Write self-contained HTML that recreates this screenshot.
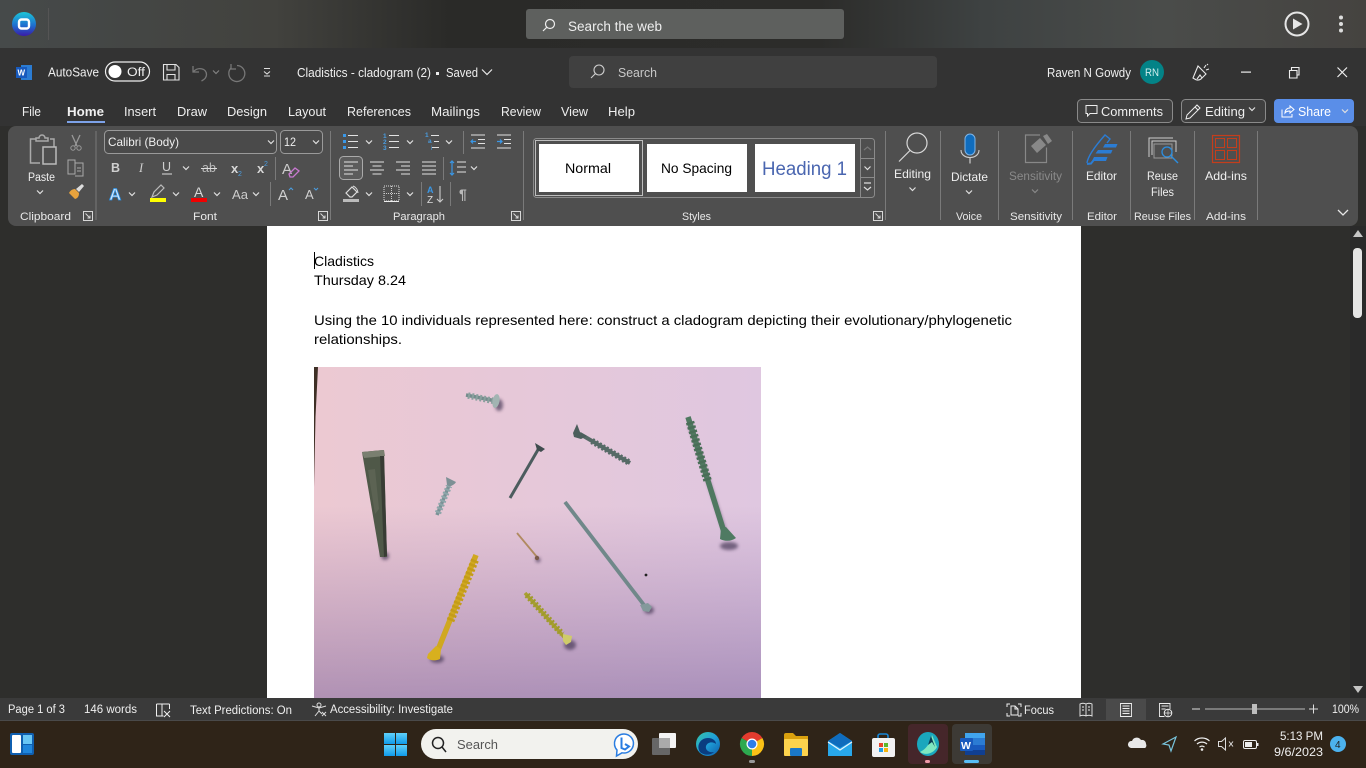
<!DOCTYPE html>
<html lang="en"><head><meta charset="utf-8"><title>Cladistics - cladogram (2)</title>
<style>
html,body{margin:0;padding:0;background:#2e2e2c;width:1366px;height:768px;overflow:hidden}
svg{display:block}
text{font-family:"Liberation Sans",sans-serif;fill:#efefef;font-size:12.5px}
.rl{font-size:11px;fill:#e8e8e8}
.d{fill:#000;font-size:14px}
.ln{fill:none;stroke:#e2e2e2;stroke-width:1.1}
</style></head><body>
<svg width="1366" height="768" viewBox="0 0 1366 768" xmlns="http://www.w3.org/2000/svg">
<defs>
<linearGradient id="top" x1="0" x2="1" y1="0" y2="0"><stop offset="0" stop-color="#464a4a"/><stop offset=".2" stop-color="#42423e"/><stop offset=".33" stop-color="#2a2a28"/><stop offset=".6" stop-color="#2c2c2a"/><stop offset=".72" stop-color="#3e4242"/><stop offset=".85" stop-color="#4a4c4a"/><stop offset="1" stop-color="#454340"/></linearGradient>
<linearGradient id="logo" x1="0" x2="0" y1="0" y2="1"><stop offset="0" stop-color="#1cc6d8"/><stop offset=".55" stop-color="#1e70d0"/><stop offset="1" stop-color="#3a1aa8"/></linearGradient>
<linearGradient id="ph" x1="0" x2="1" y1="0" y2="0"><stop offset="0" stop-color="#ecc9d2"/><stop offset="1" stop-color="#dfc7e0"/></linearGradient>
<linearGradient id="pv" x1="0" x2="0" y1="0" y2="1"><stop offset=".42" stop-color="#7a5a96" stop-opacity="0"/><stop offset="1" stop-color="#6a5090" stop-opacity=".46"/></linearGradient>
<linearGradient id="st" x1="0" x2="0" y1="0" y2="1"><stop offset="0" stop-color="#5fd0fa"/><stop offset="1" stop-color="#0f9bea"/></linearGradient>
<linearGradient id="ed" x1="0" x2="1" y1="0" y2="1"><stop offset="0" stop-color="#36c6a8"/><stop offset=".5" stop-color="#1f9fd8"/><stop offset="1" stop-color="#0c5cab"/></linearGradient>
<filter id="b"><feGaussianBlur stdDeviation="1.6"/></filter>
<path id="c" d="M-3 -1.5L0 1.5L3 -1.5" fill="none" stroke="#e0e0e0" stroke-width="1.2"/>
<path id="launch" d="M-4.5 -4.5H4.5V4.5H-4.5ZM-2.5 -2.5L2 2M2 -.5V2H-.5" fill="none" stroke="#d8d8d8" stroke-width="1"/>
</defs>

<!-- backgrounds -->
<rect width="1366" height="48" fill="url(#top)"/>
<rect y="48" width="1366" height="78" fill="#333333"/>
<rect y="126" width="1366" height="572" fill="#2e2e2c"/>
<rect x="267" y="226" width="814" height="472" fill="#fff"/>
<rect x="1350" y="226" width="16" height="472" fill="#2a2a2a"/>
<path d="M1358 230l5 7h-10z" fill="#c4c4c4"/>
<rect x="1353" y="248" width="9" height="70" rx="4" fill="#e4e4e4"/>
<path d="M1353 686h10l-5 7z" fill="#c4c4c4"/>

<!-- top browser bar -->
<circle cx="24" cy="24" r="12" fill="url(#logo)"/>
<rect x="19" y="19.500" width="10" height="9" rx="2.500" fill="none" stroke="#fff" stroke-width="2.400"/>
<rect x="48" y="8" width="1" height="32" fill="#555"/>
<rect x="526" y="9" width="318" height="30" rx="3" fill="#5e605e"/>
<circle cx="550" cy="24" r="4.500" fill="none" stroke="#eee" stroke-width="1.200"/><path d="M546.600 27.400L543 31" stroke="#eee" stroke-width="1.200"/>
<text x="568" y="31" textLength="94" lengthAdjust="spacingAndGlyphs" style="font-size:13.500px">Search the web</text>
<circle cx="1297" cy="24" r="11.500" fill="none" stroke="#e6e6e6" stroke-width="2"/><path d="M1293 18.500v11l9.500-5.500z" fill="#e6e6e6"/>
<circle cx="1341" cy="17.500" r="2" fill="#ddd"/><circle cx="1341" cy="24" r="2" fill="#ddd"/><circle cx="1341" cy="30.500" r="2" fill="#ddd"/>

<!-- title bar -->
<rect x="21" y="65" width="11" height="15" fill="#2b7cd3"/><rect x="16" y="67" width="11" height="11" fill="#185abd"/>
<text x="17.500" y="75.500" style="font-size:8px;font-weight:bold;fill:#fff">W</text>
<text x="48" y="76.500" textLength="51" lengthAdjust="spacingAndGlyphs">AutoSave</text>
<rect x="105.500" y="62" width="44" height="19" rx="9.500" fill="#333" stroke="#eee" stroke-width="1.200"/>
<circle cx="115" cy="71.500" r="6.500" fill="#fff"/>
<text x="127" y="76" textLength="18" lengthAdjust="spacingAndGlyphs" style="font-size:11.500px">Off</text>
<path d="M163.500 64.500H176l3 3V80H163.500ZM167 64.500V70H175V64.500M167 80V74.500H175V80" class="ln"/>
<path d="M193 66v6h6M193.500 71.500c5-5 13-3 13 3 0 3-2 5-5 6.500" fill="none" stroke="#777" stroke-width="1.300"/>
<use href="#c" x="216" y="72" style="opacity:.45"/>
<path d="M237 65.500a8 8 0 1 1-6 2.500M231 64v5h5" fill="none" stroke="#777" stroke-width="1.300"/>
<path d="M264 68.500h6M264 71.500l3 2.500 3-2.500M264 76h6" fill="none" stroke="#ddd" stroke-width="1.100"/>
<text x="297" y="77" textLength="134" lengthAdjust="spacingAndGlyphs">Cladistics - cladogram (2)</text>
<rect x="436" y="72" width="3" height="3" fill="#eee"/>
<text x="446" y="77" textLength="32" lengthAdjust="spacingAndGlyphs">Saved</text>
<path d="M482 69.500l5 5 5-5" fill="none" stroke="#e8e8e8" stroke-width="1.200"/>
<rect x="569" y="56" width="368" height="32" rx="4" fill="#404040"/>
<circle cx="599" cy="70" r="5" fill="none" stroke="#cfcfcf" stroke-width="1.100"/><path d="M595.500 73.500L591 78" stroke="#cfcfcf" stroke-width="1.100"/>
<text x="618" y="77" textLength="39" lengthAdjust="spacingAndGlyphs" style="fill:#c8c8c8">Search</text>
<text x="1047" y="77" textLength="84" lengthAdjust="spacingAndGlyphs">Raven N Gowdy</text>
<circle cx="1152" cy="72" r="12" fill="#038387"/><text x="1145" y="76" textLength="14" lengthAdjust="spacingAndGlyphs" style="font-size:11px;fill:#cfeeee">RN</text>
<path d="M1193 78l5-12 8 8-5 5c-3 2-5 1-8-1zM1197 79l3-4 2 3M1204 68l2-3M1206 70l3-1M1207 65l1-1" fill="none" stroke="#e8e8e8" stroke-width="1.100"/>
<rect x="1241" y="71.500" width="10" height="1.200" fill="#eee"/>
<path d="M1289.500 70.500h7.500v7.500h-7.500zM1291.500 70v-2.500h7.500v7.500h-2" fill="none" stroke="#eee" stroke-width="1.100"/>
<path d="M1337.500 67.500l9.500 9.500M1347 67.500l-9.500 9.500" stroke="#eee" stroke-width="1.200"/>

<!-- tabs -->
<text x="22" y="116" textLength="19" lengthAdjust="spacingAndGlyphs">File</text>
<text x="67" y="116" textLength="37" lengthAdjust="spacingAndGlyphs" style="font-weight:bold">Home</text>
<rect x="67" y="121" width="38" height="2" fill="#7da2e8"/>
<text x="124" y="116" textLength="32" lengthAdjust="spacingAndGlyphs">Insert</text>
<text x="177" y="116" textLength="30" lengthAdjust="spacingAndGlyphs">Draw</text>
<text x="227" y="116" textLength="40" lengthAdjust="spacingAndGlyphs">Design</text>
<text x="288" y="116" textLength="38" lengthAdjust="spacingAndGlyphs">Layout</text>
<text x="347" y="116" textLength="64" lengthAdjust="spacingAndGlyphs">References</text>
<text x="431" y="116" textLength="49" lengthAdjust="spacingAndGlyphs">Mailings</text>
<text x="501" y="116" textLength="40" lengthAdjust="spacingAndGlyphs">Review</text>
<text x="561" y="116" textLength="27" lengthAdjust="spacingAndGlyphs">View</text>
<text x="608" y="116" textLength="27" lengthAdjust="spacingAndGlyphs">Help</text>
<rect x="1077.500" y="99.500" width="95" height="23" rx="4" fill="#3f3f3f" stroke="#8a8a8a"/>
<path d="M1086 105.500h11v8h-7l-2.500 2.500v-2.500h-1.500z" fill="none" stroke="#eee"/>
<text x="1101" y="116" textLength="62" lengthAdjust="spacingAndGlyphs">Comments</text>
<rect x="1181.500" y="99.500" width="84" height="23" rx="4" fill="#3f3f3f" stroke="#8a8a8a"/>
<path d="M1186 119l1-4 10-10 3 3-10 10zM1195 107l3 3" fill="none" stroke="#eee"/>
<text x="1205" y="116" textLength="40" lengthAdjust="spacingAndGlyphs">Editing</text>
<use href="#c" x="1252" y="109" />
<rect x="1274" y="99" width="80" height="24" rx="4" fill="#5a8ee8"/>
<path d="M1282 109.500v7.500h10v-3M1285 113c0-3 2-5 5-5v-2l4 3.500-4 3.500v-2c-2 0-4 .5-5 2z" fill="none" stroke="#fff"/>
<text x="1298" y="116" textLength="33" lengthAdjust="spacingAndGlyphs" style="fill:#fff">Share</text>
<use href="#c" x="1345" y="111"/>

<!-- ribbon -->
<rect x="8" y="126" width="1350" height="100" rx="8" fill="#4f4f4f"/>
<g fill="#7a7a7a">
<rect x="95.500" y="131" width="1" height="89"/><rect x="330" y="131" width="1" height="89"/><rect x="523" y="131" width="1" height="89"/><rect x="885" y="131" width="1" height="89"/><rect x="940" y="131" width="1" height="89"/><rect x="998" y="131" width="1" height="89"/><rect x="1072" y="131" width="1" height="89"/><rect x="1130" y="131" width="1" height="89"/><rect x="1194" y="131" width="1" height="89"/><rect x="1257" y="131" width="1" height="89"/>
<rect x="275" y="157" width="1" height="23"/><rect x="270" y="182" width="1" height="24"/><rect x="463" y="131" width="1" height="23"/><rect x="443" y="157" width="1" height="23"/><rect x="421" y="182" width="1" height="24"/><rect x="450" y="182" width="1" height="24"/>
</g>
<!-- clipboard -->
<path d="M36 139h-5.500v24H40M50 139h4v8M36 141v-3h3a3 3 0 0 1 6 0h3v3z" fill="none" stroke="#aaa" stroke-width="1.500"/>
<rect x="43" y="147" width="13" height="17" fill="none" stroke="#bbb" stroke-width="1.500"/>
<text x="28" y="181" textLength="27" lengthAdjust="spacingAndGlyphs" style="font-size:11.500px">Paste</text>
<use href="#c" x="40" y="192"/>
<path d="M72 135l5 11M80 135l-5 11" stroke="#999" stroke-width="1.300" fill="none"/><circle cx="73" cy="148" r="2.200" fill="none" stroke="#999"/><circle cx="79" cy="148" r="2.200" fill="none" stroke="#999"/>
<path d="M68 160h7v14h-7zM75 163h8v13h-8M77 168h4M77 171h4" fill="none" stroke="#aaa"/>
<path d="M69 193l6 6c3-1 4-3 4-6l-4-4c-3 0-5 2-6 4z" fill="#e8a33d"/><path d="M76 189l6-5 2 2-5 6z" fill="#ddd"/>
<text class="rl" x="20" y="220" textLength="51" lengthAdjust="spacingAndGlyphs">Clipboard</text>
<use href="#launch" x="88" y="216"/>
<!-- font -->
<rect x="104.500" y="130.500" width="172" height="23" rx="4" fill="#4a4a4a" stroke="#9a9a9a"/>
<text x="108" y="146" textLength="71" lengthAdjust="spacingAndGlyphs" style="font-size:12px">Calibri (Body)</text>
<use href="#c" x="271" y="142"/>
<rect x="280.500" y="130.500" width="42" height="23" rx="4" fill="#4a4a4a" stroke="#9a9a9a"/>
<text x="284" y="146" textLength="12" lengthAdjust="spacingAndGlyphs" style="font-size:12px">12</text>
<use href="#c" x="316" y="142"/>
<text x="111" y="172" style="font-size:12.500px;font-weight:bold;fill:#cfcfcf">B</text>
<text x="139" y="172" style="font-size:12.500px;font-style:italic;fill:#cfcfcf;font-family:'Liberation Serif',serif">I</text>
<text x="162" y="171" style="font-size:12.500px;fill:#cfcfcf">U</text><rect x="162" y="173.500" width="10" height="1" fill="#ddd"/>
<text x="202" y="172" style="font-size:12.500px;fill:#bbb">ab</text><rect x="201" y="168" width="16" height="1" fill="#ddd"/>
<text x="231" y="173" style="font-size:13px;font-weight:bold;fill:#d8d8d8">x</text><text x="238" y="176" style="font-size:7px;fill:#4a9de0">2</text>
<text x="257" y="173" style="font-size:13px;font-weight:bold;fill:#d8d8d8">x</text><text x="264" y="166" style="font-size:7px;fill:#4a9de0">2</text>
<use href="#c" x="186" y="168"/>
<text x="282" y="174" style="font-size:15px;fill:#ccc">A</text><path d="M289 174l6-6 4 3-6 6h-3z" fill="none" stroke="#c878d0" stroke-width="1.300"/>
<text x="109" y="200" style="font-size:17px;font-weight:bold;fill:#cfe6fb;stroke:#2b8ee0;stroke-width:.8">A</text>
<use href="#c" x="132" y="194"/>
<path d="M152 197l2-5 7-7 3 3-7 7z" fill="none" stroke="#bbb" stroke-width="1.200"/><rect x="150" y="198" width="16" height="4" fill="#ffff00"/>
<use href="#c" x="176" y="194"/>
<text x="194" y="197" style="font-size:14px;fill:#d8d8d8">A</text><rect x="191" y="198" width="16" height="4" fill="#f00000"/>
<use href="#c" x="217" y="194"/>
<text x="232" y="199" textLength="16" lengthAdjust="spacingAndGlyphs" style="font-size:13px;fill:#ccc">Aa</text>
<use href="#c" x="256" y="194"/>
<text x="278" y="200" style="font-size:15px;fill:#d0d0d0">A</text><path d="M289 190l2-2 2 2" fill="none" stroke="#4a9de0" stroke-width="1.100"/>
<text x="305" y="199" style="font-size:13px;fill:#d0d0d0">A</text><path d="M314 188l2 2 2-2" fill="none" stroke="#4a9de0" stroke-width="1.100"/>
<text class="rl" x="193" y="220" textLength="24" lengthAdjust="spacingAndGlyphs">Font</text>
<use href="#launch" x="323" y="216"/>
<!-- paragraph row 1 -->
<g fill="#3a97e6"><rect x="343" y="134" width="3" height="3"/><rect x="343" y="140" width="3" height="3"/><rect x="343" y="146" width="3" height="3"/></g>
<path d="M348 135.500h10M348 141.500h10M348 147.500h10M389 135.500h10M389 141.500h10M389 147.500h10M431 135.500h8M434 141.500h5M432 147.500h7" class="ln"/>
<text x="383" y="138" style="font-size:6.500px;font-weight:bold;fill:#4a9de0">1</text><text x="383" y="144" style="font-size:6.500px;font-weight:bold;fill:#4a9de0">2</text><text x="383" y="150" style="font-size:6.500px;font-weight:bold;fill:#4a9de0">3</text><text x="425" y="137" style="font-size:6.500px;font-weight:bold;fill:#4a9de0">1</text><text x="428" y="143" style="font-size:6.500px;font-weight:bold;fill:#4a9de0">a</text><text x="431" y="150" style="font-size:6.500px;fill:#4a9de0">i</text>
<use href="#c" x="369" y="142"/><use href="#c" x="410" y="142"/><use href="#c" x="449" y="142"/>
<path d="M471 135h14M478 139.500h7M478 143.500h7M471 148h14M497 135h14M504 139.500h7M504 143.500h7M497 148h14" class="ln"/>
<path d="M476 141.500h-5M473 139.500l-2 2 2 2M497 141.500h5M500 139.500l2 2-2 2" fill="none" stroke="#3a97e6" stroke-width="1.200"/>
<!-- row 2 -->
<rect x="339.500" y="156.500" width="23" height="23" rx="4" fill="#5c5c5c" stroke="#aaa"/>
<path d="M344 162h14M344 166h9M344 170h14M344 174h9M370 162h14M372.500 166h9M370 170h14M372.500 174h9M396 162h14M401 166h9M396 170h14M401 174h9M422 162h14M422 166h14M422 170h14M422 174h14M457 162h9M457 167h9M457 172h9" class="ln"/>
<path d="M452 161v14M450 163l2-2 2 2M450 173l2 2 2-2" fill="none" stroke="#3a97e6" stroke-width="1.200"/>
<use href="#c" x="474" y="168"/>
<!-- row 3 -->
<path d="M346 193l6-6 5 5-5 5h-2z" fill="none" stroke="#ddd" stroke-width="1.200"/><path d="M353 186c3 1 5 4 5 7" fill="none" stroke="#ddd"/><rect x="343" y="199" width="16" height="3" fill="#bbb"/>
<use href="#c" x="369" y="194"/>
<path d="M384 186h15v15h-15z" fill="none" stroke="#ddd" stroke-dasharray="1 1"/><path d="M391.500 186v15M384 193.500h15" stroke="#ccc" stroke-dasharray="1 1"/><path d="M384 201.500h15" stroke="#eee"/>
<use href="#c" x="410" y="194"/>
<text x="427" y="193" style="font-size:9px;font-weight:bold;fill:#3a97e6">A</text><text x="427" y="203" style="font-size:10px;fill:#ddd">Z</text>
<path d="M440 186v16M437 199l3 3 3-3" fill="none" stroke="#ccc" stroke-width="1.100"/>
<text x="459" y="199" style="font-size:14px;font-weight:bold;fill:#b8b8b8">¶</text>
<text class="rl" x="393" y="220" textLength="52" lengthAdjust="spacingAndGlyphs">Paragraph</text>
<use href="#launch" x="516" y="216"/>
<!-- styles -->
<rect x="533.500" y="138.500" width="341" height="59" rx="3" fill="none" stroke="#8a8a8a"/>
<rect x="535.500" y="140.500" width="107" height="55" fill="none" stroke="#bdbdbd"/>
<rect x="539" y="144" width="100" height="48" fill="#fff"/>
<rect x="647" y="144" width="100" height="48" fill="#fff"/>
<rect x="755" y="144" width="100" height="48" fill="#fff"/>
<text x="565" y="173" textLength="46" lengthAdjust="spacingAndGlyphs" style="font-size:14px;fill:#000">Normal</text>
<text x="661" y="173" textLength="71" lengthAdjust="spacingAndGlyphs" style="font-size:14px;fill:#000">No Spacing</text>
<text x="762" y="175" textLength="85" lengthAdjust="spacingAndGlyphs" style="font-size:19px;fill:#4a66b0">Heading 1</text>
<path d="M860.500 138.500v59M860.500 158.500h14M860.500 177.500h14" stroke="#8a8a8a" fill="none"/>
<path d="M864 150l3.500-3 3.500 3" fill="none" stroke="#777" stroke-width="1.200"/>
<use href="#c" x="867.500" y="168"/>
<path d="M864 183h7M864 187l3.500 3 3.500-3" fill="none" stroke="#ddd" stroke-width="1.200"/>
<text class="rl" x="682" y="220" textLength="29" lengthAdjust="spacingAndGlyphs">Styles</text>
<use href="#launch" x="878" y="216"/>
<!-- editing -->
<circle cx="917" cy="143" r="10" fill="none" stroke="#d8d8d8" stroke-width="1.200"/><path d="M910 150.500l-11 11" stroke="#d8d8d8" stroke-width="1.200"/>
<text x="894" y="178" textLength="37" lengthAdjust="spacingAndGlyphs" style="font-size:12px">Editing</text>
<use href="#c" x="912.500" y="189"/>
<!-- dictate -->
<rect x="965" y="134" width="10" height="21" rx="5" fill="#0f6cbd" stroke="#7fb4e6"/>
<path d="M961 150c0 10 18 10 18 0" fill="none" stroke="#ccc" stroke-width="1.100"/><path d="M970 157.500v6" stroke="#ccc" stroke-width="1.200"/>
<text x="951" y="181" textLength="37" lengthAdjust="spacingAndGlyphs" style="font-size:12px">Dictate</text>
<use href="#c" x="969" y="192"/>
<text class="rl" x="956" y="220" textLength="26" lengthAdjust="spacingAndGlyphs">Voice</text>
<!-- sensitivity -->
<path d="M1040 135h-14.500v27.500h21v-15" fill="none" stroke="#888" stroke-width="1.200"/>
<path d="M1037 153l-6-7 9-8 6 7z" fill="#888"/><path d="M1043 136l4-2 5 7-4 3z" fill="#888"/>
<text x="1009" y="180" textLength="53" lengthAdjust="spacingAndGlyphs" style="font-size:11.500px;fill:#8a8a8a">Sensitivity</text>
<use href="#c" x="1035" y="191" style="opacity:.4"/>
<text class="rl" x="1010" y="220" textLength="52" lengthAdjust="spacingAndGlyphs">Sensitivity</text>
<!-- editor -->
<path d="M1087 163c1-8 10-19 18-28l5 4-3 4" fill="none" stroke="#2b7cd3" stroke-width="1.400"/>
<path d="M1087 164l4-.5 4-5" fill="none" stroke="#2b7cd3" stroke-width="2"/>
<path d="M1105 144h12.500l-1.500 3.500h-13zM1098 150h14.500l-1.500 3.500h-15.500zM1094 157h13.500l-1.500 4h-14z" fill="#2b7cd3"/>
<text x="1086" y="180" textLength="31" lengthAdjust="spacingAndGlyphs" style="font-size:12px">Editor</text>
<text class="rl" x="1087" y="220" textLength="30" lengthAdjust="spacingAndGlyphs">Editor</text>
<!-- reuse files -->
<path d="M1149 157v-19h24M1152 155v-14h24v11" fill="none" stroke="#ccc"/>
<rect x="1154" y="144" width="18" height="14" fill="none" stroke="#999"/>
<circle cx="1167" cy="152" r="5" fill="#4f4f4f" stroke="#2b8ee0" stroke-width="1.300"/><path d="M1171 156l7 7" stroke="#2b8ee0" stroke-width="1.400"/>
<text x="1147" y="180" textLength="31" lengthAdjust="spacingAndGlyphs" style="font-size:12px">Reuse</text>
<text x="1151" y="196" textLength="23" lengthAdjust="spacingAndGlyphs" style="font-size:12px">Files</text>
<text class="rl" x="1134" y="220" textLength="57" lengthAdjust="spacingAndGlyphs">Reuse Files</text>
<!-- add-ins -->
<rect x="1212.500" y="135.500" width="27" height="27" fill="none" stroke="#c43e1c" stroke-width="1.200"/>
<path d="M1215.500 138.500h9v9h-9zM1227.500 138.500h9v9h-9zM1215.500 150.500h9v9h-9zM1227.500 150.500h9v9h-9z" fill="none" stroke="#c43e1c"/>
<text x="1205" y="180" textLength="42" lengthAdjust="spacingAndGlyphs" style="font-size:12px">Add-ins</text>
<text class="rl" x="1206" y="220" textLength="40" lengthAdjust="spacingAndGlyphs">Add-ins</text>
<path d="M1338 210l5 5 5-5" fill="none" stroke="#e8e8e8" stroke-width="1.300"/>

<!-- document -->
<rect x="314" y="252" width="1" height="17" fill="#000"/>
<text class="d" x="314" y="266" textLength="60" lengthAdjust="spacingAndGlyphs">Cladistics</text>
<text class="d" x="314" y="285" textLength="92" lengthAdjust="spacingAndGlyphs">Thursday 8.24</text>
<text class="d" x="314" y="325" textLength="698" lengthAdjust="spacingAndGlyphs">Using the 10 individuals represented here: construct a cladogram depicting their evolutionary/phylogenetic</text>
<text class="d" x="314" y="344" textLength="88" lengthAdjust="spacingAndGlyphs">relationships.</text>

<!-- photo -->
<rect x="314" y="367" width="447" height="331" fill="url(#ph)"/>
<rect x="314" y="367" width="447" height="331" fill="url(#pv)"/>
<path d="M314 367h4l-2.500 50-1.500 70z" fill="#3e3026"/>
<!-- shadows -->
<g filter="url(#b)" fill="#4a3a58" opacity=".7">
<ellipse cx="499" cy="405" rx="4" ry="6"/><ellipse cx="385" cy="556" rx="4" ry="4"/><ellipse cx="729" cy="546" rx="9" ry="4"/>
<ellipse cx="649" cy="610" rx="5" ry="4"/><ellipse cx="570" cy="645" rx="6" ry="5"/><ellipse cx="437" cy="659" rx="7" ry="4"/><ellipse cx="538" cy="560" rx="2.500" ry="2.500"/>
<path d="M690 425L726 535" stroke="#4a3a58" stroke-width="3" fill="none"/>
</g>
<!-- top small screw -->
<path d="M466 395L496 401" stroke="#748c8c" stroke-width="3.500"/><path d="M468 395.500L494 401" stroke="#8aa09e" stroke-width="6.500" stroke-dasharray="2 2"/>
<ellipse cx="496" cy="401" rx="3.500" ry="7" fill="#a2b4b2" transform="rotate(10 496 401)"/>
<!-- wedge nail -->
<path d="M362 452l22-2 3 107h-7z" fill="#4f5848"/><path d="M362 452l22-2 1 6-21 2z" fill="#7a7f70"/><path d="M380 456l4 0 3 100-3 1z" fill="#383c34"/><path d="M368 470l7-1 4 40-4 5z" fill="#666a5c" opacity=".6"/>
<!-- small screw -->
<path d="M437 515L450 483" stroke="#7a9296" stroke-width="3.500"/><path d="M438 513L449 486" stroke="#8ea6aa" stroke-width="6.500" stroke-dasharray="2 2"/>
<path d="M446 477l10 5c-1 2-3 3-5 4l-4-1z" fill="#7d9095"/>
<!-- thin nail -->
<path d="M510 498L539 448" stroke="#4c5c5e" stroke-width="3"/><path d="M535 443l10 6-4 3-4-2z" fill="#3f4c4e"/>
<!-- screw upper right -->
<path d="M580 434L630 463" stroke="#566a66" stroke-width="4"/><path d="M592 441L630 463" stroke="#566a66" stroke-width="6.500" stroke-dasharray="2 2"/>
<path d="M577 424l3 8 7 4-6 3-7-2-1-4z" fill="#4c5e5c"/>
<!-- big green -->
<path d="M688 417L724 532" stroke="#4f7860" stroke-width="5.500"/><path d="M690 422L708 482" stroke="#4a6e58" stroke-width="8.500" stroke-dasharray="2.500 2"/>
<path d="M721 528l5-1 10 11c-4 3-10 4-16 1z" fill="#4f7a62"/>
<!-- long nail -->
<path d="M565 502L644 605" stroke="#70888a" stroke-width="3.800"/><path d="M640 605l8-2 4 4-3 5-6-1z" fill="#84999b"/>
<circle cx="646" cy="575" r="1.400" fill="#222"/>
<!-- pin -->
<path d="M517 533L537 557" stroke="#b08a60" stroke-width="1.800"/><circle cx="537" cy="558" r="2.200" fill="#7a5a4a"/>
<!-- yellow long -->
<path d="M476 555L438 650" stroke="#d0a820" stroke-width="5.500"/><path d="M475 560L450 622" stroke="#c49c18" stroke-width="8" stroke-dasharray="2.500 2"/>
<path d="M436 646l5 3-1 10c-4 2-9 2-13-1l1-4z" fill="#d8b01e"/>
<!-- yellow-green -->
<path d="M525 593L565 638" stroke="#a8a030" stroke-width="3.500"/><path d="M527 595L562 634" stroke="#a09a2c" stroke-width="6.500" stroke-dasharray="2 2"/>
<path d="M563 634l9 2-1 6-5 3-3-4z" fill="#cfcb6a"/>

<!-- status bar -->
<rect y="698" width="1366" height="23" fill="#3a3a3a"/>
<rect y="720" width="1366" height="1" fill="#4a4a4a"/>
<text x="8" y="713" textLength="57" lengthAdjust="spacingAndGlyphs" style="font-size:11.500px">Page 1 of 3</text>
<text x="84" y="713" textLength="53" lengthAdjust="spacingAndGlyphs" style="font-size:11.500px">146 words</text>
<path d="M156.500 704h13M156.500 704v12h7M162 704v12M169.500 704v5M164 711l6 6M170 711l-6 6" fill="none" stroke="#eee"/>
<text x="190" y="714" textLength="102" lengthAdjust="spacingAndGlyphs" style="font-size:11.500px">Text Predictions: On</text>
<circle cx="319" cy="705" r="2" fill="none" stroke="#ddd"/><path d="M312 706l7 2 7-2M319 708v3l-4 5M319 711l3 3M322 712l4 4M326 712l-4 4" fill="none" stroke="#ddd"/>
<text x="330" y="713" textLength="123" lengthAdjust="spacingAndGlyphs" style="font-size:11.500px">Accessibility: Investigate</text>
<path d="M1007 707v-3h3M1018 704h3v3M1021 713v3h-3M1010 716h-3v-3" fill="none" stroke="#eee"/><path d="M1011 706h4l3 3v6h-7zM1015 706v3h3" fill="none" stroke="#eee"/>
<text x="1024" y="714" textLength="30" lengthAdjust="spacingAndGlyphs" style="font-size:11.500px">Focus</text>
<path d="M1086 704c-2-1-4-1-6 0v12c2-1 4-1 6 0 2-1 4-1 6 0v-12c-2-1-4-1-6 0zM1086 704v12M1082 707h2M1082 710h2M1088 707h2M1088 710h2" fill="none" stroke="#eee" stroke-width=".9"/>
<rect x="1106" y="699" width="40" height="21" fill="#4a4a4a"/>
<path d="M1120.500 703.500h11v13h-11zM1122.500 706h7M1122.500 708.500h7M1122.500 711h7M1122.500 713.500h7" fill="none" stroke="#eee" stroke-width=".9"/>
<path d="M1170 709v-5.500h-10.500v13h5M1161.500 706h7M1161.500 709h4" fill="none" stroke="#eee" stroke-width=".9"/><circle cx="1168" cy="713" r="3.800" fill="#3a3a3a" stroke="#eee"/><path d="M1164.500 713h7M1168 709.500v7" stroke="#eee" stroke-width=".7"/>
<rect x="1192" y="708.500" width="8" height="1" fill="#ddd"/>
<rect x="1205" y="708.500" width="100" height="1" fill="#bbb"/>
<rect x="1252" y="704" width="5" height="10" fill="#bdbdbd"/>
<path d="M1309 709h9M1313.500 704.500v9" stroke="#ddd"/>
<text x="1332" y="713" textLength="27" lengthAdjust="spacingAndGlyphs" style="font-size:11.500px">100%</text>

<!-- taskbar -->
<rect y="721" width="1366" height="47" fill="#2f2418"/>
<rect x="10" y="733" width="24" height="22" rx="2" fill="#0f5fb0"/><rect x="12" y="735" width="9" height="18" rx="1" fill="#fff"/><rect x="23" y="735" width="9" height="9" fill="#68c6f5"/><rect x="23" y="745" width="9" height="8" fill="#1f86dc"/>
<rect x="384" y="733" width="11" height="11" fill="url(#st)"/><rect x="396" y="733" width="11" height="11" fill="url(#st)"/><rect x="384" y="745" width="11" height="11" fill="url(#st)"/><rect x="396" y="745" width="11" height="11" fill="url(#st)"/>
<rect x="421" y="729" width="217" height="30" rx="15" fill="#f2f2ee"/>
<circle cx="438" cy="743" r="5.500" fill="none" stroke="#222" stroke-width="1.500"/><path d="M442 747l4 5" stroke="#222" stroke-width="1.500"/>
<text x="457" y="749" textLength="41" lengthAdjust="spacingAndGlyphs" style="font-size:13px;fill:#555">Search</text>
<path d="M624 734a9.500 9.500 0 1 1-2 18.800l-5.500 3.200 .5-6a9.500 9.500 0 0 1 7-16z" fill="#fff" stroke="#2a7de1" stroke-width="1.500"/>
<path d="M621.500 737.500v10.500l3.500 1.500 4-3-4-2.500" fill="none" stroke="#2a7de1" stroke-width="2"/>
<rect x="652" y="738" width="18" height="17" rx="1" fill="#666"/>
<rect x="659" y="733" width="17" height="15" rx="1" fill="#f4f4f4"/>
<rect x="659" y="738" width="11" height="10" fill="#aaa"/>
<circle cx="708" cy="744" r="12" fill="url(#ed)"/>
<path d="M700 752c-4-6 0-14 8-14 5 0 8 3 8 6-2-2-8-3-10 2-1 4 3 7 8 6-4 4-11 3-14 0z" fill="#0a3d80"/>
<path d="M752 744L741.600 738A12 12 0 0 1 762.400 738Z" fill="#e33b2e"/><path d="M752 744L762.400 738A12 12 0 0 1 752 756Z" fill="#fbc116"/><path d="M752 744L752 756A12 12 0 0 1 741.600 738Z" fill="#2da94f"/>
<circle cx="752" cy="744" r="5.500" fill="#fff"/><circle cx="752" cy="744" r="4.300" fill="#2f7de8"/>
<rect x="749" y="760" width="6" height="3" rx="1.500" fill="#999"/>
<path d="M784 735a2 2 0 0 1 2-2h7l3 3h12v5h-24z" fill="#d9a00e"/><rect x="784" y="739" width="24" height="17" rx="1" fill="#fcd34d"/><rect x="790" y="748" width="12" height="8" rx="1" fill="#1a78c8"/>
<path d="M828 741l12-8 12 8v15h-24z" fill="#28a8ea"/><path d="M828 741l12-8 12 8-12 7z" fill="#0f6cbd"/><path d="M828 742l12 8 12-8" fill="none" stroke="#e8f5fd" stroke-width="1.200"/>
<path d="M878 739v-3a2 2 0 0 1 2-2h6a2 2 0 0 1 2 2v3" fill="none" stroke="#1787d8" stroke-width="1.600"/>
<rect x="872" y="738" width="23" height="19" rx="2" fill="#f2f2f2"/><rect x="879" y="743" width="4" height="4" fill="#e8442a"/><rect x="884" y="743" width="4" height="4" fill="#5cb82c"/><rect x="879" y="748" width="4" height="4" fill="#1f9ee8"/><rect x="884" y="748" width="4" height="4" fill="#f8b60e"/>
<rect x="908" y="724" width="40" height="40" rx="4" fill="#45262a"/>
<ellipse cx="928" cy="744" rx="11" ry="12" fill="#1aa7bd"/>
<path d="M920 752c6-3 10-8 12-17l5 12c-3 6-11 9-17 5z" fill="#7fe8c0"/><path d="M931 736l-3 9 4-3 3 5z" fill="#0c3d55"/>
<rect x="925" y="760" width="5" height="3" rx="1.500" fill="#f09aa8"/>
<rect x="952" y="724" width="40" height="40" rx="4" fill="#3d3a35"/>
<rect x="965" y="733" width="20" height="22" rx="1" fill="#2b7cd3"/><rect x="965" y="733" width="20" height="5" fill="#41a5ee"/><rect x="965" y="745" width="20" height="5" fill="#185abd"/><rect x="965" y="750" width="20" height="5" fill="#103f91"/>
<rect x="960" y="738" width="13" height="13" rx="1" fill="#185abd"/>
<text x="961" y="749" style="font-size:10.500px;font-weight:bold;fill:#fff">W</text>
<rect x="964" y="760" width="15" height="3" rx="1.500" fill="#58bdf5"/>
<!-- tray -->
<path d="M1131 748a3.500 3.500 0 0 1 1-7 5 5 0 0 1 9-1 4 4 0 0 1 5 4 3 3 0 0 1-1 4z" fill="#e8e8e8"/>
<path d="M1163 744l13-7-5 14-2-6z" fill="none" stroke="#78c4dc" stroke-width="1.200"/>
<path d="M1194.500 741c4-4 11-4 15 0M1197 744c3-2.500 7-2.500 10 0M1199.500 747c1.500-1 3.500-1 5 0" fill="none" stroke="#eee" stroke-width="1.200"/><circle cx="1202" cy="749.500" r="1.300" fill="#eee"/>
<path d="M1218.500 741.500h3l4-3.500v12l-4-3.500h-3zM1229 741.500l4 5M1233 741.500l-4 5" fill="none" stroke="#ddd"/>
<rect x="1243.500" y="740.500" width="13" height="8" rx="1.500" fill="none" stroke="#eee"/><rect x="1245" y="742" width="7" height="5" fill="#eee"/><rect x="1257" y="743" width="1.500" height="3" fill="#eee"/>
<text x="1280" y="740" textLength="43" lengthAdjust="spacingAndGlyphs" style="font-size:12px">5:13 PM</text>
<text x="1274" y="756" textLength="49" lengthAdjust="spacingAndGlyphs" style="font-size:12px">9/6/2023</text>
<circle cx="1338" cy="744" r="8" fill="#4cb2ee"/><text x="1335" y="748" style="font-size:10px;fill:#222">4</text>
</svg>
</body></html>
